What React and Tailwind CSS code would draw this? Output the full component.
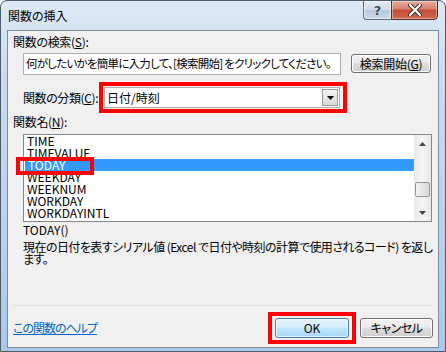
import React from "react";

const items = ["TIME", "TIMEVALUE", "TODAY", "WEEKDAY", "WEEKNUM", "WORKDAY", "WORKDAYINTL"];

function Btn({ children, className = "", primary = false }) {
  return (
    <div
      className={
        "flex items-center justify-center rounded-[3px] border text-[12px] leading-[14px] text-black " +
        (primary
          ? "border-[#3c7fb1] bg-[linear-gradient(#e5f4fc_0%,#d5ecfb_45%,#bee6fd_50%,#a7d9f5_100%)] shadow-[inset_0_0_0_1px_#ffffffaa] "
          : "border-[#707070] bg-[linear-gradient(#f2f2f2_0%,#ebebeb_45%,#dddddd_50%,#cfcfcf_100%)] shadow-[inset_0_0_0_1px_#fcfcfc] ") +
        className
      }
    >
      {children}
    </div>
  );
}

export default function App() {
  return (
    <div className="relative w-[446px] h-[352px] overflow-hidden rounded-t-[7px] border border-[#4d5b6b] bg-[linear-gradient(#dde9f7_0%,#cbdcf0_20%,#bcd3ec_60%,#aac8ea_100%)] font-['Noto_Sans_CJK_JP',sans-serif] [font-feature-settings:'palt'] text-black">
      {/* title bar */}
      <div className="flex h-[29px] items-center pl-[7px] text-[12px] leading-[14px] text-black">
        関数の挿入
      </div>

      {/* caption buttons */}
      <div className="absolute right-[7px] top-[-1px] flex h-[20px]">
        <div className="flex w-[28px] items-center justify-center rounded-bl-[4px] border border-[#5d6d80] border-r-0 bg-[linear-gradient(#e4ebf4_0%,#cfdbe9_50%,#b9c9dc_51%,#c9d6e5_100%)] shadow-[inset_0_0_0_1px_#ffffff99]">
          <span className="font-['DejaVu_Sans',sans-serif] text-[13px] font-bold leading-[13px] text-[#3b4a5c] [text-shadow:0_0_1px_#fff]">?</span>
        </div>
        <div className="flex w-[47px] items-center justify-center rounded-br-[4px] border border-[#5a2620] bg-[linear-gradient(#e9a99c_0%,#d7826f_45%,#c24c33_50%,#cf6a4f_100%)] shadow-[inset_0_0_0_1px_#ffffff66]">
          <svg width="14" height="12" viewBox="0 0 14 12">
            <path d="M2 1 L12 11 M12 1 L2 11" stroke="#3b2b2b" strokeWidth="4" strokeLinecap="round" />
            <path d="M2 1 L12 11 M12 1 L2 11" stroke="#ffffff" strokeWidth="2.2" strokeLinecap="round" />
          </svg>
        </div>
      </div>

      {/* client area */}
      <div className="ml-[6px] flex h-[318px] w-[432px] flex-col border border-[#7e8b9a] bg-[#f0f0f0] pl-[5px] text-[12px] leading-[14px]">
        <div className="mt-[4px] tracking-[-0.3px]">関数の検索(<span className="underline">S</span>):</div>

        <div className="mt-[4px] ml-[10px] flex items-start">
          <div className="h-[22px] w-[318px] overflow-hidden border border-[#abadb3] bg-white pl-[2px] pt-[2px] text-[11.5px] whitespace-nowrap tracking-[-0.75px]">
            何がしたいかを簡単に入力して、[検索開始] をクリックしてください。
          </div>
          <Btn className="ml-[10px] mt-[1px] h-[19px] w-[80px] tracking-[-0.3px]">
            検索開始(<span className="underline">G</span>)
          </Btn>
        </div>

        <div className="mt-[12px] ml-[10px] flex items-center">
          <div className="w-[81px] whitespace-nowrap tracking-[-0.4px]">関数の分類(<span className="underline">C</span>):</div>
          <div className="relative">
            <div className="flex h-[21px] w-[236px] items-center border border-[#abadb3] bg-white pl-[2px]">
              <span className="flex-1">日付/時刻</span>
              <div className="mr-[1px] flex h-[17px] w-[16px] items-center justify-center border border-[#9a9a9a] bg-[linear-gradient(#f2f2f2,#d8d8d8)]">
                <svg width="7" height="4" viewBox="0 0 7 4"><path d="M0 0 H7 L3.5 4 Z" fill="#000" /></svg>
              </div>
            </div>
            <div className="pointer-events-none absolute left-[-5px] top-[-5px] h-[31px] w-[248px] border-[4px] border-[#ff0000]" />
          </div>
        </div>

        <div className="mt-[7px] tracking-[-0.3px]">関数名(<span className="underline">N</span>):</div>

        <div className="relative mt-[5px] ml-[10px] flex h-[88px] w-[409px] border border-[#828790] bg-white">
          <div className="flex flex-1 flex-col">
            {items.map((it) =>
              it === "TODAY" ? (
                <div key={it} className="ml-[1px] h-[12px] border border-dotted border-[#c98a3a] bg-[#3399ff] pl-[2px] text-[12px] leading-[10px] text-white">
                  {it}
                </div>
              ) : (
                <div key={it} className="h-[12px] pl-[3px] text-[12px] leading-[12px]">
                  {it}
                </div>
              )
            )}
          </div>
          <div className="flex w-[17px] flex-col items-center bg-[linear-gradient(90deg,#e8e8e8,#f5f5f5,#e8e8e8)]">
            <div className="flex h-[17px] items-center justify-center">
              <svg width="7" height="4" viewBox="0 0 7 4"><path d="M0 4 H7 L3.5 0 Z" fill="#444" /></svg>
            </div>
            <div className="mt-[30px] h-[15px] w-[15px] rounded-[2px] border border-[#979797] bg-[linear-gradient(90deg,#f3f3f3,#e6e6e6,#d6d6d6)]" />
            <div className="mt-auto flex h-[17px] items-center justify-center">
              <svg width="7" height="4" viewBox="0 0 7 4"><path d="M0 0 H7 L3.5 4 Z" fill="#444" /></svg>
            </div>
          </div>
          <div className="pointer-events-none absolute left-[-8px] top-[22px] h-[18px] w-[78px] border-[4px] border-[#ff0000]" />
        </div>

        <div className="mt-[1px] ml-[10px]">TODAY()</div>
        <div className="mt-[4px] ml-[10px] whitespace-nowrap leading-[12px] tracking-[-0.55px]">
          現在の日付を表すシリアル値 (Excel で日付や時刻の計算で使用されるコード) を返し
          <br />
          ます。
        </div>

        <div className="mt-auto h-px w-[420px] bg-[#dcdfe3]" />
        <div className="mb-[9px] mt-[12px] flex items-center">
          <div className="flex-1 text-[#0066cc] underline tracking-[-1px]">この関数のヘルプ</div>
          <div className="relative">
            <Btn primary className="h-[20px] w-[74px]">OK</Btn>
            <div className="pointer-events-none absolute left-[-7px] top-[-6px] h-[32px] w-[88px] border-[4px] border-[#ff0000]" />
          </div>
          <Btn className="ml-[11px] mr-[5px] h-[20px] w-[73px] tracking-[-0.5px]">キャンセル</Btn>
        </div>
      </div>
    </div>
  );
}
